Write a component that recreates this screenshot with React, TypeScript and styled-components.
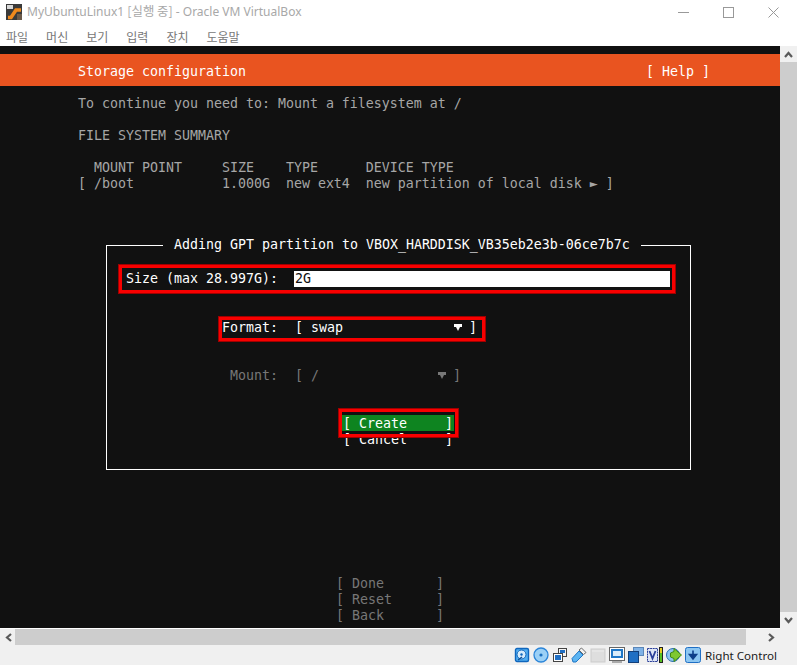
import React from "react";
import styled, { createGlobalStyle } from "styled-components";

const Global = createGlobalStyle`
  html, body {
    margin: 0;
    padding: 0;
    background: #f0f0f0;
    overflow: hidden;
  }
  * {
    box-sizing: border-box;
  }
`;

const Window = styled.div`
  width: 797px;
  height: 665px;
  display: flex;
  flex-direction: column;
  background: #f0f0f0;
  font-family: "Noto Sans", "Noto Sans CJK KR", sans-serif;
  overflow: hidden;
`;

const TitleBar = styled.div`
  height: 24px;
  flex: none;
  display: flex;
  align-items: center;
  background: #fff;
  padding: 0 1px 0 6px;
`;

const TitleText = styled.span`
  margin-left: 5px;
  margin-top: -2px;
  font-size: 12px;
  color: #a8a8a8;
  white-space: nowrap;
  flex: 1;
`;

const TitleKorean = styled.span`
  font-family: "Noto Sans CJK KR", sans-serif;
  font-size: 12.4px;
`;

const WinButton = styled.div`
  width: 45px;
  height: 24px;
  display: flex;
  align-items: center;
  justify-content: center;
`;

const MenuBar = styled.div`
  height: 22px;
  flex: none;
  display: flex;
  align-items: center;
  gap: 18px;
  background: #fff;
  padding: 2px 0 0 6px;
  font-family: "Noto Sans CJK KR", sans-serif;
  font-size: 12px;
  color: #777;
`;

const Body = styled.div`
  flex: none;
  height: 582px;
  display: flex;
`;

const Terminal = styled.div`
  width: 780px;
  height: 582px;
  background: #111111;
  padding-top: 8px;
  font-family: "DejaVu Sans Mono", monospace;
  font-size: 13.29px;
  line-height: 16px;
  color: #a6a6a6;
  white-space: pre;
  display: flex;
  flex-direction: column;
`;

const Header = styled.div`
  height: 32px;
  flex: none;
  background: #e95420;
  color: #fff;
  display: flex;
  justify-content: space-between;
  align-items: center;
  padding: 4px 70px 0 78px;
`;

const Lines = styled.div`
  padding-left: 78px;
  padding-top: 10px;
`;

const Line = styled.div<{ $gap?: number }>`
  height: 16px;
  margin-bottom: ${({ $gap }) => $gap ?? 0}px;
`;

const Dialog = styled.fieldset`
  margin: 45px 0 0 106px;
  padding: 0;
  width: 585px;
  height: 233px;
  border: 1px solid #fff;
  display: block;
  min-width: 0;
  color: #fff;
`;

const DialogTitle = styled.legend`
  margin-left: 56px;
  padding: 0 11px;
  height: 16px;
`;

const Form = styled.div`
  display: flex;
  flex-direction: column;
  padding-top: 18px;
`;

const SizeRow = styled.div`
  position: relative;
  display: flex;
  align-items: center;
  height: 16px;
  padding-left: 19px;
`;

const Input = styled.div`
  width: 376px;
  height: 16px;
  margin-left: 16px;
  background: #fff;
  color: #111;
  padding-left: 1px;
`;

const Marker = styled.div<{ $top: number; $right: number; $bottom: number; $left: number }>`
  position: absolute;
  top: ${({ $top }) => $top}px;
  right: ${({ $right }) => $right}px;
  bottom: ${({ $bottom }) => $bottom}px;
  left: ${({ $left }) => $left}px;
  border: 3px solid #f80000;
  box-shadow: 0 0 0 1px #a00000;
  z-index: 2;
  pointer-events: none;
`;

const SelectRow = styled.div<{ $muted?: boolean; $top: number }>`
  position: relative;
  display: flex;
  width: 258px;
  height: 16px;
  margin: ${({ $top }) => $top}px 0 0 115px;
  color: ${({ $muted }) => ($muted ? "#777" : "#fff")};
`;

const SelectLabel = styled.span`
  width: 73px;
  text-align: right;
  padding-right: 17px;
`;

const SelectValue = styled.span<{ $width: number }>`
  width: ${({ $width }) => $width}px;
`;

const Arrow = styled.svg`
  width: 8px;
  height: 16px;
  flex: none;
  margin-right: 7px;
`;

const Buttons = styled.div`
  margin: 31px 0 0 235px;
  width: 112px;
`;

const Button = styled.div<{ $active?: boolean }>`
  position: relative;
  height: 16px;
  width: 112px;
  display: flex;
  justify-content: space-between;
  padding: 0 1px;
  line-height: 18px;
  background: ${({ $active }) => ($active ? "#0e8420" : "transparent")};
`;

const Footer = styled.div`
  margin: 106px 0 0 336px;
  width: 108px;
  color: #777;
`;

const FooterButton = styled.div`
  display: flex;
  justify-content: space-between;
  height: 16px;
`;

const VScroll = styled.div`
  width: 17px;
  display: flex;
  flex-direction: column;
  background: #f0f0f0;
`;

const ScrollCap = styled.div`
  width: 17px;
  height: 16px;
  flex: none;
  display: flex;
  align-items: center;
  justify-content: center;
`;

const VThumb = styled.div`
  flex: 1;
  background: #cdcdcd;
`;

const HScroll = styled.div`
  height: 17px;
  flex: none;
  display: flex;
  width: 780px;
  background: #f0f0f0;
  border-top: 1px solid #fff;
`;

const HThumb = styled.div`
  width: 731px;
  margin-left: -2px;
  background: #cdcdcd;
`;

const HTrack = styled.div`
  flex: 1;
`;

const StatusBar = styled.div`
  flex: 1;
  display: flex;
  align-items: center;
  justify-content: flex-end;
  padding: 0 20px 0 0;
  gap: 3px;
`;

const StatusIcon = styled.svg`
  width: 16px;
  height: 16px;
  flex: none;
`;

const HostKey = styled.span`
  margin-left: 1px;
  font-size: 11.6px;
  color: #1a1a1a;
  font-family: "Noto Sans", sans-serif;
`;

const Chevron = ({ d }: { d: string }) => (
  <svg width="9" height="9" viewBox="0 0 9 9">
    <path d={d} fill="none" stroke="#5a5a5a" strokeWidth="2.2" />
  </svg>
);

const Logo = () => (
  <svg width="16" height="16" viewBox="0 0 16 16">
    <rect width="16" height="16" fill="#3a3a3a" />
    <path d="M1 1h6v4H1z" fill="#d8d8d8" />
    <path d="M2 13.5h3L10 6h5" stroke="#f08a1d" strokeWidth="3.6" fill="none" />
    <rect x="11" y="10" width="5" height="6" fill="#6a5a4a" />
  </svg>
);

const Disk = () => (
  <StatusIcon viewBox="0 0 16 16">
    <rect x="1.5" y="1.5" width="13" height="13" rx="1.5" fill="#52aef0" stroke="#0f66bd" strokeWidth="1.4" />
    <circle cx="7.5" cy="7.5" r="4.5" fill="#d6ecfb" stroke="#0f66bd" />
    <circle cx="7.5" cy="7.5" r="1.2" fill="#0f66bd" />
    <path d="M4 13l4-3" stroke="#0f4f96" strokeWidth="1.5" />
  </StatusIcon>
);

const Optical = () => (
  <StatusIcon viewBox="0 0 16 16">
    <circle cx="8" cy="8" r="7" fill="#9bd0f6" stroke="#2a84d8" strokeWidth="1.3" />
    <circle cx="8" cy="8" r="1.6" fill="#1a6fc0" />
  </StatusIcon>
);

const Audio = () => (
  <StatusIcon viewBox="0 0 16 16">
    <rect x="6.5" y="1.5" width="8" height="8" fill="#f4f4f4" stroke="#444" />
    <rect x="1.5" y="6.5" width="9" height="8" fill="#fff" stroke="#444" />
    <rect x="3" y="8" width="6" height="5" fill="#1f6fc4" />
    <rect x="8" y="3" width="5" height="3" fill="#1f6fc4" />
  </StatusIcon>
);

const Usb = () => (
  <StatusIcon viewBox="0 0 16 16">
    <path d="M1 11.5L8 4l4 4-7 7H2z" fill="#5db5f2" stroke="#1f77c7" />
    <path d="M10.5 1l4.5 4.5-2.5 2L8 3z" fill="#f2f2f2" stroke="#6a6a6a" />
  </StatusIcon>
);

const Folder = () => (
  <StatusIcon viewBox="0 0 16 16">
    <rect x="1" y="2" width="14" height="13" fill="#dedede" stroke="#cbcbcb" />
    <path d="M2 4h12" stroke="#ececec" />
  </StatusIcon>
);

const Display = () => (
  <StatusIcon viewBox="0 0 16 16">
    <rect x="0.5" y="0.5" width="15" height="13" fill="#fff" stroke="#666" />
    <rect x="3" y="3" width="10" height="7" fill="#d9ecfa" stroke="#1f77c7" strokeWidth="2" />
    <path d="M3 15h10" stroke="#666" />
  </StatusIcon>
);

const Capture = () => (
  <StatusIcon viewBox="0 0 16 16">
    <rect x="5.5" y="0.5" width="10" height="8" fill="#7fb2e6" stroke="#5a86b8" />
    <rect x="0.5" y="4.5" width="10" height="11" fill="#1f6fc4" stroke="#123f7a" />
  </StatusIcon>
);

const Vt = () => (
  <svg width="16" height="16" viewBox="0 0 16 16" style={{ flex: "none" }}>
    <rect x="0.5" y="1.5" width="10" height="13" fill="#dfe6f5" stroke="#2a3f9a" strokeDasharray="2 0.6" />
    <path d="M2.5 4l3 7.5 3-7.5" stroke="#2a3f9a" strokeWidth="1.8" fill="none" />
    <rect x="12" y="0" width="4" height="16" fill="#222" />
    <rect x="13" y="1" width="2" height="5" fill="#e8d020" />
    <rect x="13" y="6" width="2" height="9" fill="#55c020" />
  </svg>
);

const Globe = () => (
  <StatusIcon viewBox="0 0 16 16">
    <circle cx="7" cy="8" r="6.5" fill="#8fc5ee" stroke="#2a6fb0" />
    <path d="M8 1.5L15.5 8 8 14.5v-3l-3.5-1.5V6L8 4.5z" fill="#7fc832" stroke="#3f8a14" />
  </StatusIcon>
);

const Capturing = () => (
  <StatusIcon viewBox="0 0 16 16">
    <rect x="0.5" y="0.5" width="15" height="15" rx="2" fill="#8cc6f2" stroke="#1f6fc4" />
    <path d="M8 3.5V8M4.5 7.5h7L8 12z" stroke="#0e3f8a" strokeWidth="1.6" fill="#0e3f8a" />
  </StatusIcon>
);

const App = () => {
  return (
    <Window>
      <Global />
      <TitleBar>
        <Logo />
        <TitleText>
          MyUbuntuLinux1 <TitleKorean>[실행 중]</TitleKorean> - Oracle VM VirtualBox
        </TitleText>
        <WinButton>
          <svg width="11" height="11" viewBox="0 0 11 11">
            <path d="M0 5.5h11" stroke="#999" />
          </svg>
        </WinButton>
        <WinButton>
          <svg width="11" height="11" viewBox="0 0 11 11">
            <rect x="0.5" y="0.5" width="10" height="10" fill="none" stroke="#999" />
          </svg>
        </WinButton>
        <WinButton>
          <svg width="11" height="11" viewBox="0 0 11 11">
            <path d="M0.5 0.5l10 10M10.5 0.5l-10 10" stroke="#999" />
          </svg>
        </WinButton>
      </TitleBar>
      <MenuBar>
        <span>파일</span>
        <span>머신</span>
        <span>보기</span>
        <span>입력</span>
        <span>장치</span>
        <span>도움말</span>
      </MenuBar>
      <Body>
        <Terminal>
          <Header>
            <span>Storage configuration</span>
            <span>[ Help ]</span>
          </Header>
          <Lines>
            <Line $gap={16}>To continue you need to: Mount a filesystem at /</Line>
            <Line $gap={16}>FILE SYSTEM SUMMARY</Line>
            <Line>{"  MOUNT POINT     SIZE    TYPE      DEVICE TYPE"}</Line>
            <Line>{"[ /boot           1.000G  new ext4  new partition of local disk ► ]"}</Line>
          </Lines>
          <Dialog>
            <DialogTitle>Adding GPT partition to VBOX_HARDDISK_VB35eb2e3b-06ce7b7c</DialogTitle>
            <Form>
              <SizeRow>
                Size (max 28.997G):
                <Input>2G</Input>
                <Marker $top={-6} $right={15} $bottom={-6} $left={12} />
              </SizeRow>
              <SelectRow $top={33}>
                <SelectLabel>Format:</SelectLabel>
                <SelectValue $width={159}>[ swap</SelectValue>
                <Arrow viewBox="0 0 8 16">
                  <path d="M0 4h8v3H6l-2 4-2-4H0z" fill="#fff" />
                </Arrow>
                ]
                <Marker $top={-3} $right={-5} $bottom={-5} $left={-3} />
              </SelectRow>
              <SelectRow $muted $top={32}>
                <SelectLabel>Mount:</SelectLabel>
                <SelectValue $width={143}>[ /</SelectValue>
                <Arrow viewBox="0 0 8 16">
                  <path d="M0 4h8v3H6l-2 4-2-4H0z" fill="#777" />
                </Arrow>
                ]
              </SelectRow>
              <Buttons>
                <Button $active>
                  <span>[ Create</span>
                  <span>]</span>
                  <Marker $top={-6} $right={-4} $bottom={-6} $left={-3} />
                </Button>
                <Button>
                  <span>[ Cancel</span>
                  <span>]</span>
                </Button>
              </Buttons>
            </Form>
          </Dialog>
          <Footer>
            <FooterButton>
              <span>[ Done</span>
              <span>]</span>
            </FooterButton>
            <FooterButton>
              <span>[ Reset</span>
              <span>]</span>
            </FooterButton>
            <FooterButton>
              <span>[ Back</span>
              <span>]</span>
            </FooterButton>
          </Footer>
        </Terminal>
        <VScroll>
          <ScrollCap>
            <Chevron d="M1 7l3.5-4 3.5 4" />
          </ScrollCap>
          <VThumb />
          <ScrollCap>
            <Chevron d="M1 2l3.5 4 3.5-4" />
          </ScrollCap>
        </VScroll>
      </Body>
      <HScroll>
        <ScrollCap>
          <Chevron d="M7 1L3 4.5 7 8" />
        </ScrollCap>
        <HThumb />
        <HTrack />
        <ScrollCap>
          <Chevron d="M2 1l4 3.5L2 8" />
        </ScrollCap>
      </HScroll>
      <StatusBar>
        <Disk />
        <Optical />
        <Audio />
        <Usb />
        <Folder />
        <Display />
        <Capture />
        <Vt />
        <Globe />
        <Capturing />
        <HostKey>Right Control</HostKey>
      </StatusBar>
    </Window>
  );
};

export default App;
